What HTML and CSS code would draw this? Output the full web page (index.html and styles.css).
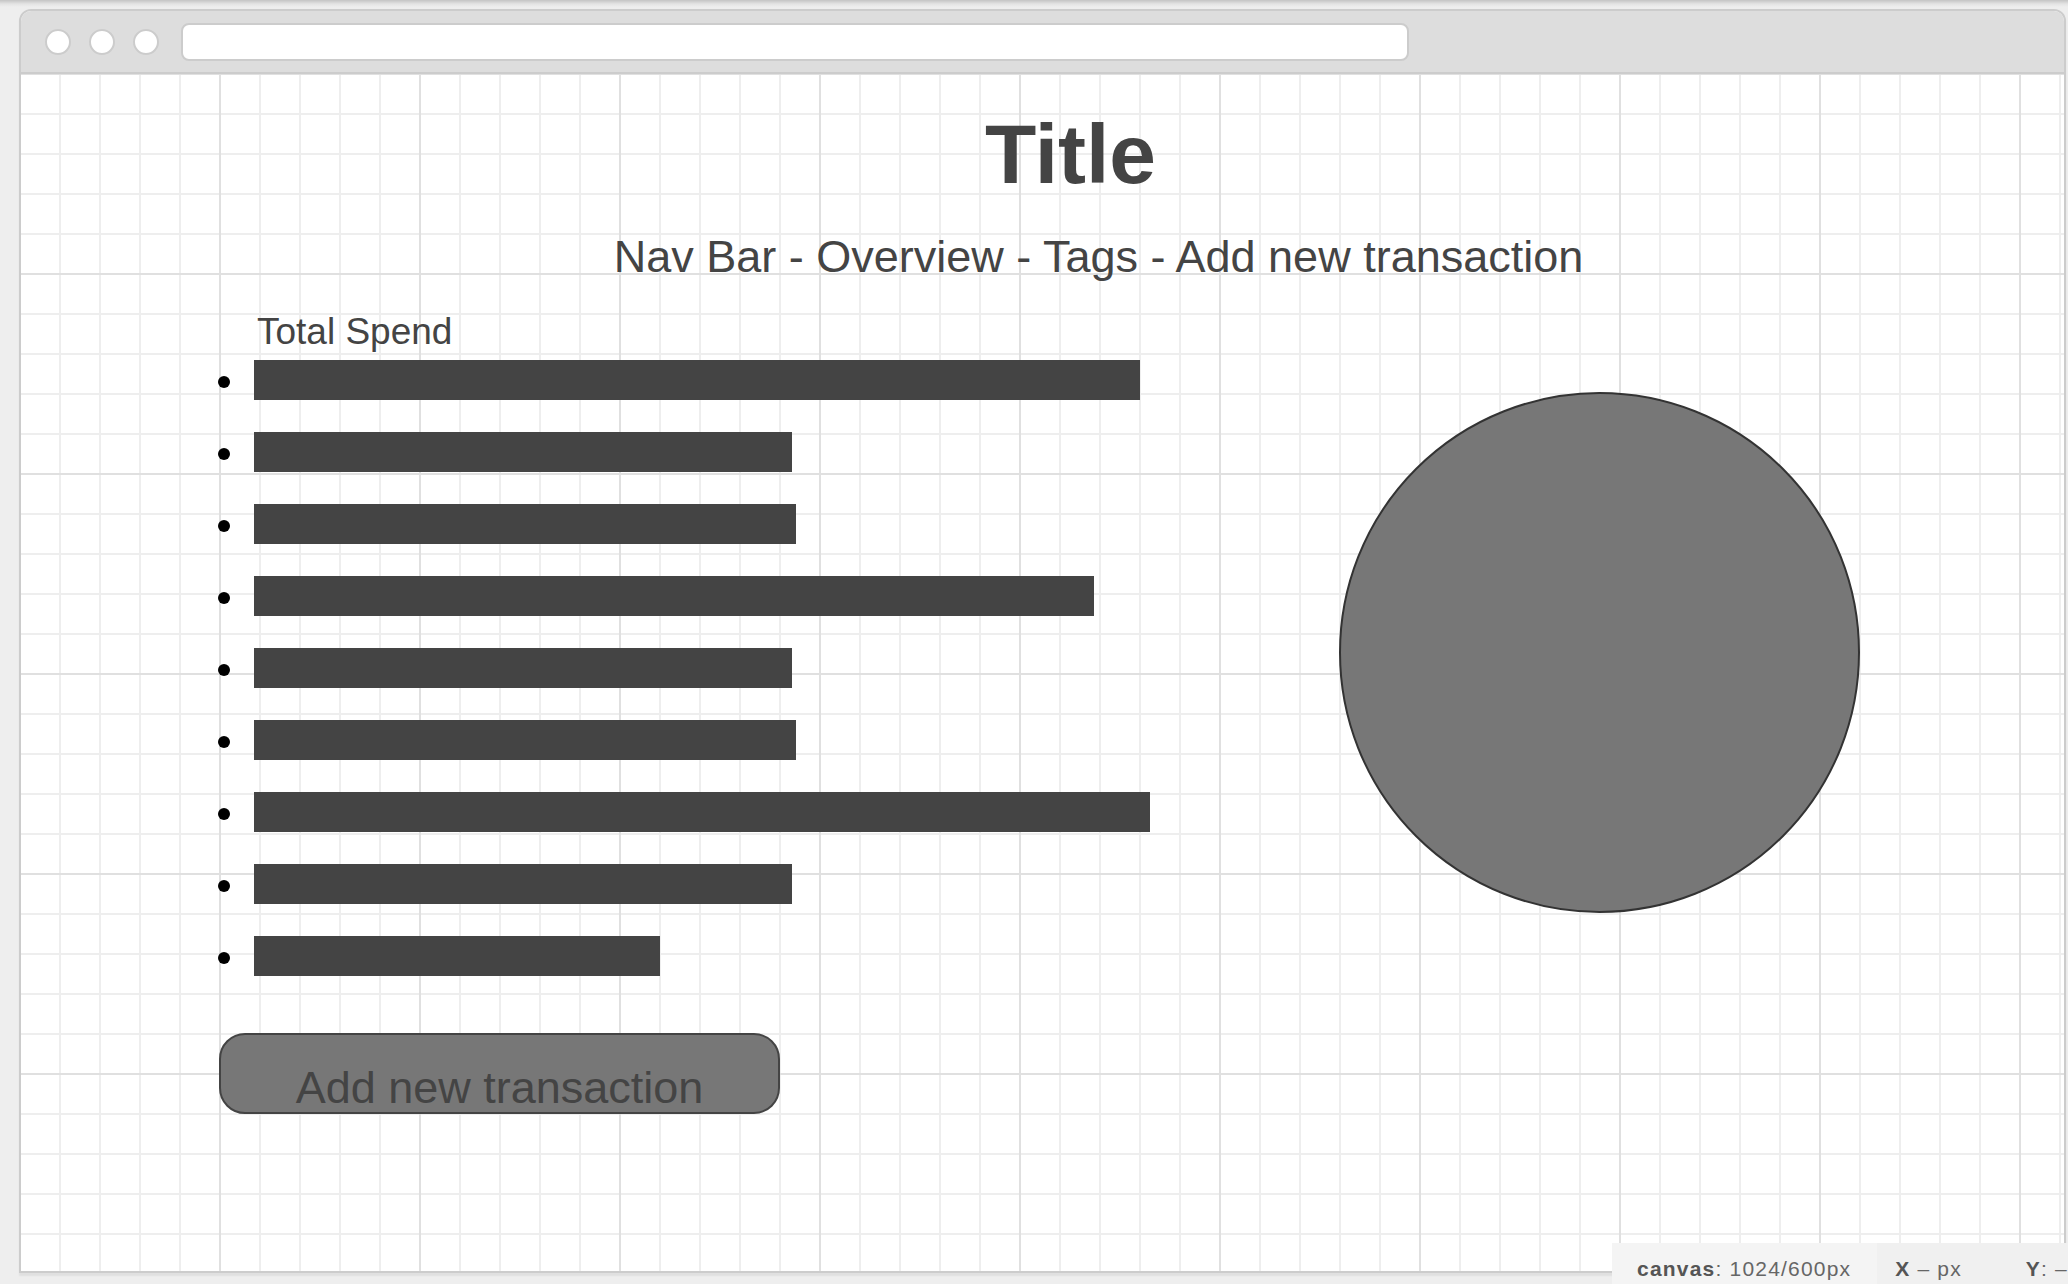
FILE: index.html
```html
<!DOCTYPE html>
<html lang="en">
<head>
    <meta charset="UTF-8">
    <meta name="viewport" content="width=device-width, initial-scale=1.0">
    <title>Spending overview wireframe</title>
    <link rel="stylesheet" href="styles.css">
</head>
<body>
    <div class="browser-frame">
        <div class="title-bar">
            <span class="window-dot"></span>
            <span class="window-dot"></span>
            <span class="window-dot"></span>
            <div class="address-bar"></div>
        </div>

        <div class="canvas">
            <h1 class="page-title">Title</h1>
            <div class="nav-text">Nav Bar - Overview - Tags - Add new transaction</div>

            <div class="main-row">
                <div class="spend-column">
                    <div class="spend-label">Total Spend</div>
                    <ul class="spend-list">
                        <li><span class="spend-bar" style="width: 886px"></span></li>
                        <li><span class="spend-bar" style="width: 538px"></span></li>
                        <li><span class="spend-bar" style="width: 542px"></span></li>
                        <li><span class="spend-bar" style="width: 840px"></span></li>
                        <li><span class="spend-bar" style="width: 538px"></span></li>
                        <li><span class="spend-bar" style="width: 542px"></span></li>
                        <li><span class="spend-bar" style="width: 896px"></span></li>
                        <li><span class="spend-bar" style="width: 538px"></span></li>
                        <li><span class="spend-bar" style="width: 406px"></span></li>
                    </ul>
                    <button class="add-button">Add new transaction</button>
                </div>
                <div class="pie-chart"></div>
            </div>
        </div>
    </div>

    <div class="status-bar">
        <div class="status-item status-canvas"><b>canvas</b>: 1024/600px</div>
        <div class="status-item status-x"><b>X</b> &ndash; px</div>
        <div class="status-item status-y"><b>Y</b>: &ndash;</div>
    </div>
</body>
</html>
```

FILE: styles.css
```css
* {
    margin: 0;
    padding: 0;
    box-sizing: border-box;
}

body {
    width: 2068px;
    height: 1284px;
    overflow: hidden;
    position: relative;
    background: linear-gradient(to bottom, #c4c4c4 0px, #e4e4e4 4px, #eeeeee 7px);
    font-family: 'Liberation Sans', Arial, sans-serif;
    color: #444;
}

/* window chrome */
.browser-frame {
    margin: 9px 0 0 19px;
    width: 2047px;
    height: 1264px;
    border: 2px solid #cccccc;
    border-radius: 12px 12px 0 0;
    overflow: hidden;
    background: #fff;
    box-shadow: 0 3px 2px rgba(0, 0, 0, 0.06);
    display: flex;
    flex-direction: column;
}

.title-bar {
    height: 63px;
    flex: 0 0 63px;
    background: #dddddd;
    border-bottom: 2px solid #cccccc;
    display: flex;
    align-items: center;
    padding-left: 24px;
    gap: 18px;
}

.window-dot {
    width: 26px;
    height: 26px;
    border-radius: 50%;
    background: #fff;
    border: 2px solid #cccccc;
}

.address-bar {
    margin-left: 4px;
    width: 1228px;
    height: 38px;
    background: #fff;
    border: 2px solid #cccccc;
    border-radius: 8px;
}

/* grid canvas */
.canvas {
    flex: 1;
    background-color: #fff;
    background-image:
        linear-gradient(to right, #e0e0e0 2px, transparent 2px),
        linear-gradient(to bottom, #e0e0e0 2px, transparent 2px),
        linear-gradient(to right, #eeeeee 2px, transparent 2px),
        linear-gradient(to bottom, #eeeeee 2px, transparent 2px);
    background-size: 200px 200px, 200px 200px, 40px 40px, 40px 40px;
    background-position: -2px -1px;
    padding-top: 38px;
}

.page-title {
    font-size: 84px;
    line-height: 84px;
    font-weight: bold;
    text-align: center;
    padding-left: 56px;
    color: #444;
}

.nav-text {
    margin-top: 38px;
    font-size: 45px;
    line-height: 45px;
    text-align: center;
    padding-left: 112px;
    color: #444;
}

.main-row {
    margin-top: 34px;
    padding-left: 190px;
    display: flex;
    align-items: flex-start;
}

.spend-column {
    flex: 0 0 1128px;
}

.spend-label {
    font-size: 37px;
    line-height: 37px;
    margin-left: 46px;
    color: #444;
}

.spend-list {
    list-style: none;
    margin-top: 10px;
    display: flex;
    flex-direction: column;
    gap: 32px;
}

.spend-list li {
    height: 40px;
    display: flex;
    align-items: center;
    padding-left: 7px;
    gap: 24px;
}

.spend-list li::before {
    content: '';
    width: 12px;
    height: 12px;
    border-radius: 50%;
    background: #000;
    margin-top: 4px;
}

.spend-bar {
    display: block;
    height: 40px;
    background: #444444;
}

.add-button {
    margin: 57px 0 0 8px;
    width: 561px;
    height: 81px;
    background: #777777;
    border: 2px solid #444444;
    border-radius: 26px;
    padding-top: 28px;
    font-family: 'Liberation Sans', Arial, sans-serif;
    font-size: 45px;
    line-height: 45px;
    color: #444444;
    text-align: center;
    display: block;
}

.pie-chart {
    margin-top: 79px;
    width: 521px;
    height: 521px;
    border-radius: 50%;
    background: #777777;
    border: 2px solid #333333;
}

/* bottom status strip, sits over the frame */
.status-bar {
    position: absolute;
    left: 1612px;
    top: 1243px;
    right: 0;
    bottom: 0;
    display: flex;
    font-size: 21px;
    letter-spacing: 1.2px;
    color: #666;
    white-space: nowrap;
}

.status-item {
    padding-top: 14px;
    background: #f4f4f4;
}

.status-item b {
    font-weight: bold;
    color: #555;
}

.status-canvas {
    width: 268px;
    padding-left: 25px;
}

.status-x {
    width: 132px;
    padding-left: 18px;
    background: #f0f0f0;
}

.status-y {
    flex: 1;
    padding-left: 18px;
    background: #f0f0f0;
}
```
